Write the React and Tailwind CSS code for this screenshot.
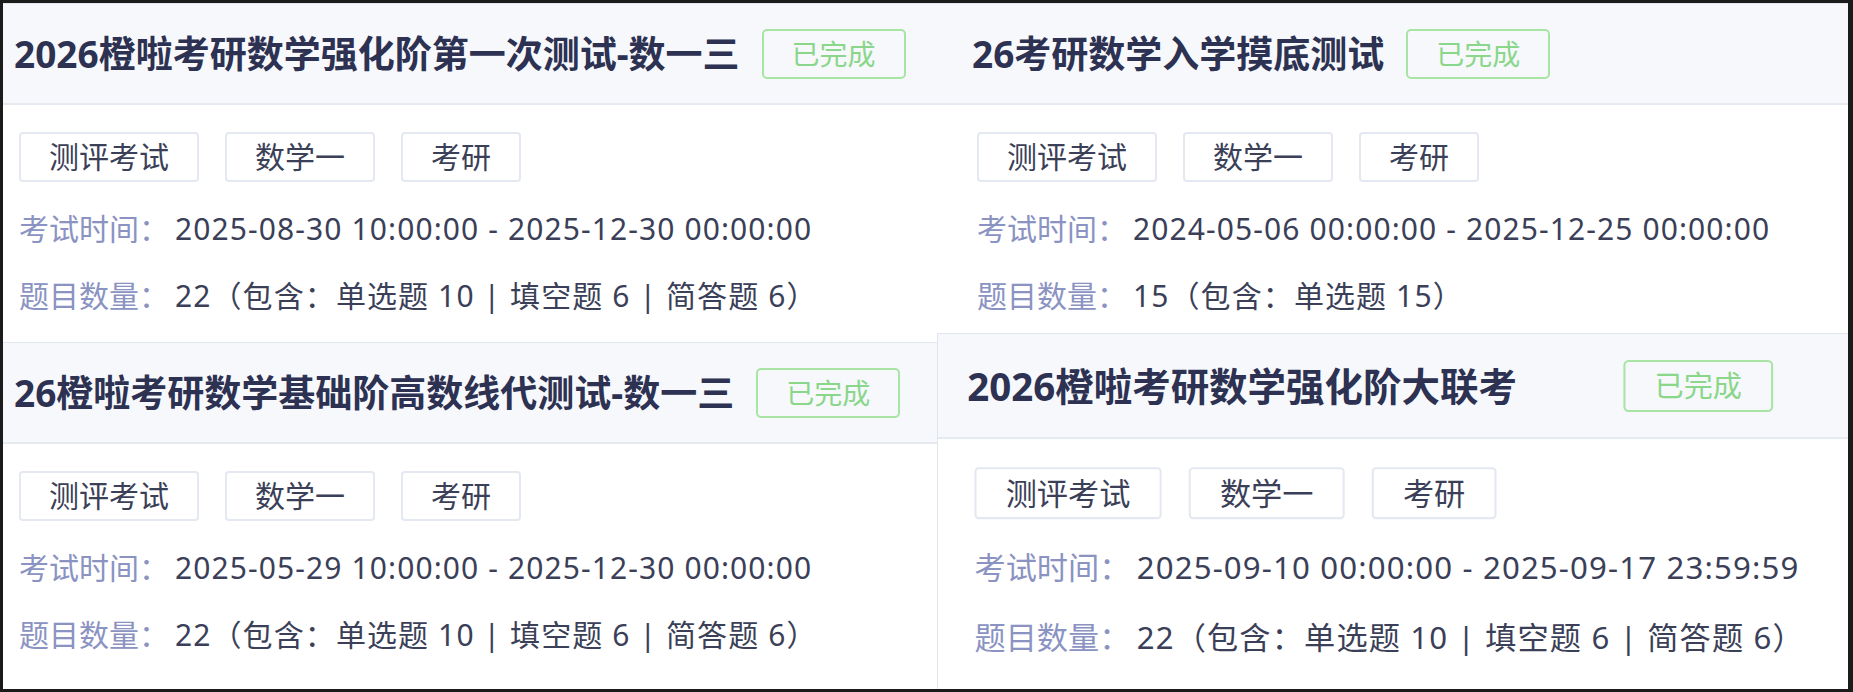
import React from 'react';

const TAGS = ['测评考试', '数学一', '考研'];

const EXAMS = [
  {
    title: '2026橙啦考研数学强化阶第一次测试-数一三',
    time: '2025-08-30 10:00:00 - 2025-12-30 00:00:00',
    count: '22（包含：单选题 10 | 填空题 6 | 简答题 6）',
    headPad: 'pl-[11px]',
    bodyPad: 'pl-[16px]',
  },
  {
    title: '26考研数学入学摸底测试',
    time: '2024-05-06 00:00:00 - 2025-12-25 00:00:00',
    count: '15（包含：单选题 15）',
    headPad: 'pl-[35px]',
    bodyPad: 'pl-[40px]',
  },
  {
    title: '26橙啦考研数学基础阶高数线代测试-数一三',
    time: '2025-05-29 10:00:00 - 2025-12-30 00:00:00',
    count: '22（包含：单选题 10 | 填空题 6 | 简答题 6）',
    headPad: 'pl-[11px]',
    bodyPad: 'pl-[16px]',
  },
  {
    title: '2026橙啦考研数学强化阶大联考',
    time: '2025-09-10 00:00:00 - 2025-09-17 23:59:59',
    count: '22（包含：单选题 10 | 填空题 6 | 简答题 6）',
    headPad: 'pl-[28px] pr-[107px] justify-between',
    bodyPad: 'pl-[35px]',
    hovered: true,
  },
];

function InfoLine({ label, value, className }) {
  return (
    <div className={`text-[30px] leading-[36px] whitespace-nowrap ${className}`}>
      <span className="text-[#8a93c2]">{label}</span>
      <span className="ml-[6px] tracking-[1.1px] text-[#3b3f58]">{value}</span>
    </div>
  );
}

function ExamCard({ exam }) {
  const shell = exam.hovered
    ? 'relative z-10 origin-top-left -translate-y-[9px] scale-[1.04] border-l border-t border-[#e1e6ee] bg-white'
    : 'border-t border-[#e3e8ef] bg-white';

  return (
    <div className={shell}>
      {/* header: title + status */}
      <div className={`flex h-[101px] items-center border-b-2 border-[#e5eaf1] bg-[#f6f8fb] ${exam.headPad}`}>
        <h3 className="whitespace-nowrap text-[37px] font-bold leading-none text-[#2d3152]">{exam.title}</h3>
        <span className="ml-[22px] flex h-[50px] shrink-0 items-center rounded-[5px] border-2 border-[#a8e4a4] px-[28px] text-[28px] leading-none text-[#8ad68a]">
          已完成
        </span>
      </div>

      <div className={`pt-[27px] ${exam.bodyPad}`}>
        <div className="flex gap-[26px]">
          {TAGS.map((tag) => (
            <span
              key={tag}
              className="flex h-[50px] items-center rounded-[4px] border-2 border-[#e4e8f0] bg-white px-[28px] text-[30px] leading-none text-[#3b3f58]"
            >
              {tag}
            </span>
          ))}
        </div>
        <InfoLine className="mt-[29px]" label="考试时间：" value={exam.time} />
        <InfoLine className="mt-[31px]" label="题目数量：" value={exam.count} />
      </div>
    </div>
  );
}

export default function App() {
  return (
    <div className="h-[692px] w-[1853px] bg-[#1b1b1b] pb-[3px] pl-[3px] pr-[5px] pt-[3px] font-['Noto_Sans','Noto_Sans_CJK_SC',sans-serif]">
      <div className="grid h-full grid-cols-[934px_911px] grid-rows-[339px_347px] overflow-hidden bg-white">
        {EXAMS.map((exam) => (
          <ExamCard key={exam.title} exam={exam} />
        ))}
      </div>
    </div>
  );
}
